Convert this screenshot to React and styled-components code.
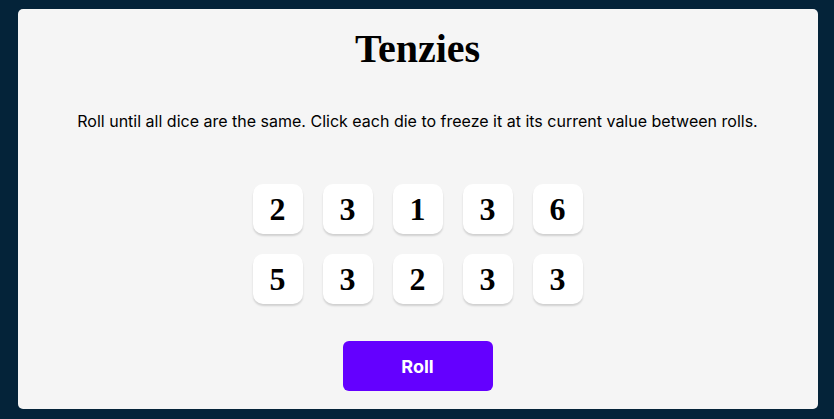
import React from "react";
import styled, { createGlobalStyle } from "styled-components";

const GlobalStyle = createGlobalStyle`
  html, body { margin: 0; padding: 0; }
  body {
    background: #042339;
    font-family: Inter, "Liberation Sans", sans-serif;
  }
`;

const Page = styled.div`
  width: 834px;
  height: 419px;
  display: flex;
  align-items: flex-start;
  justify-content: center;
  padding: 9px 0 0 1px;
  box-sizing: border-box;
`;

const Card = styled.main`
  width: 800px;
  height: 400px;
  background: #f5f5f5;
  border-radius: 5px;
  display: flex;
  flex-direction: column;
  align-items: center;
  box-sizing: border-box;
  padding-top: 17px;
`;

const Title = styled.h1`
  margin: 0;
  font-family: "Liberation Serif", "Times New Roman", serif;
  font-weight: 700;
  font-size: 40px;
  line-height: 46px;
  color: #000;
`;

const Instructions = styled.p`
  margin: 40px 0 0;
  font-family: Inter, "Liberation Sans", sans-serif;
  font-size: 16px;
  line-height: 19px;
  color: #000;
  text-align: center;
`;

const DiceGrid = styled.div`
  margin-top: 53px;
  display: grid;
  grid-template-columns: repeat(5, 50px);
  grid-auto-rows: 50px;
  gap: 20px;
`;

const Die = styled.button`
  width: 50px;
  height: 50px;
  border: none;
  border-radius: 10px;
  background: ${(p) => (p.$held ? "#59e391" : "#ffffff")};
  box-shadow: 0 2px 2px rgba(0, 0, 0, 0.15);
  font-family: "Liberation Serif", "Times New Roman", serif;
  font-weight: 700;
  font-size: 32px;
  color: #000;
  padding: 0;
  display: flex;
  align-items: center;
  justify-content: center;
  cursor: pointer;
`;

const RollButton = styled.button`
  margin-top: 37px;
  width: 150px;
  height: 50px;
  border: none;
  border-radius: 6px;
  background: #6400ff;
  color: #fff;
  font-family: Inter, "Liberation Sans", sans-serif;
  font-weight: 700;
  font-size: 18px;
  cursor: pointer;
`;

const dice = [2, 3, 1, 3, 6, 5, 3, 2, 3, 3];

export default function App() {
  return (
    <>
      <GlobalStyle />
      <Page>
        <Card>
          <Title>Tenzies</Title>
          <Instructions>
            Roll until all dice are the same. Click each die to freeze it at its
            current value between rolls.
          </Instructions>
          <DiceGrid>
            {dice.map((v, i) => (
              <Die key={i}>{v}</Die>
            ))}
          </DiceGrid>
          <RollButton>Roll</RollButton>
        </Card>
      </Page>
    </>
  );
}
